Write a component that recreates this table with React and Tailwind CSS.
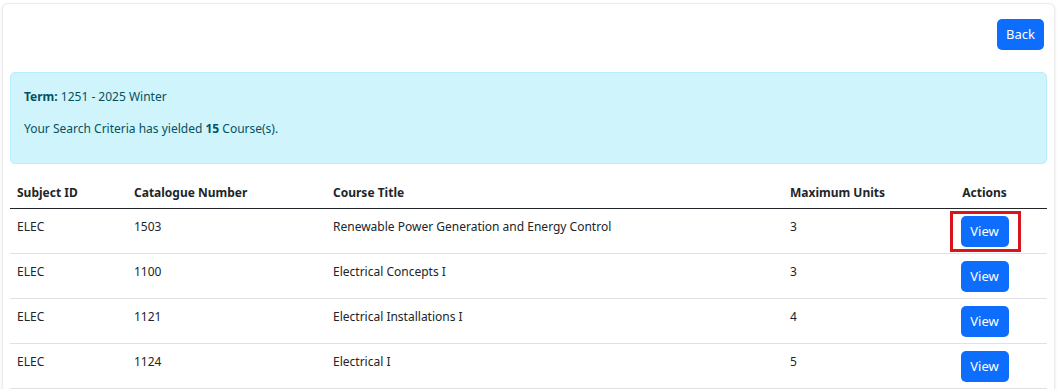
import React from 'react';

const courses = [
  { subject: 'ELEC', number: '1503', title: 'Renewable Power Generation and Energy Control', units: '3', highlight: true },
  { subject: 'ELEC', number: '1100', title: 'Electrical Concepts I', units: '3' },
  { subject: 'ELEC', number: '1121', title: 'Electrical Installations I', units: '4' },
  { subject: 'ELEC', number: '1124', title: 'Electrical I', units: '5' },
];

const ViewButton = () => (
  <button className="h-[31px] w-[48px] rounded-[5px] bg-[#0d6efd] text-[13px] text-white">
    View
  </button>
);

export default function App() {
  return (
    <div
      className="h-[389px] overflow-hidden bg-white pl-[2px] pr-[8px] pt-[3px] text-[12px] text-[#212529]"
      style={{ fontFamily: '"Noto Sans", sans-serif' }}
    >
      <div className="rounded-[6px] border border-[#ececec] bg-white px-[7px] pb-[16px] pt-[15px] shadow-sm">
        {/* Back button */}
        <div className="flex justify-end pr-[3px]">
          <button className="h-[31px] w-[47px] rounded-[5px] bg-[#0d6efd] text-[13px] text-white">
            Back
          </button>
        </div>

        {/* Search summary */}
        <div className="mt-[22px] rounded-[5px] border border-[#b6effb] bg-[#cff4fc] px-[13px] pb-[12px] pt-[14px] text-[#055160]">
          <p className="mb-[12px] leading-[20px]">
            <strong>Term:</strong> 1251 - 2025 Winter
          </p>
          <p className="mb-[12px] leading-[20px]">
            Your Search Criteria has yielded <strong>15</strong> Course(s).
          </p>
        </div>

        {/* Results table */}
        <table className="mt-[12px] w-full border-collapse">
          <thead>
            <tr className="border-b border-[#212529]">
              <th className="w-[117px] px-[7px] pb-[5px] pt-[7px] text-left font-bold leading-[20px]">Subject ID</th>
              <th className="w-[199px] px-[7px] pb-[5px] pt-[7px] text-left font-bold leading-[20px]">Catalogue Number</th>
              <th className="w-[457px] px-[7px] pb-[5px] pt-[7px] text-left font-bold leading-[20px]">Course Title</th>
              <th className="w-[139px] px-[7px] pb-[5px] pt-[7px] text-left font-bold leading-[20px]">Maximum Units</th>
              <th className="px-[7px] pb-[5px] pt-[7px] text-center font-bold leading-[20px]">Actions</th>
            </tr>
          </thead>
          <tbody>
            {courses.map((c) => (
              <tr key={c.number} className="border-b border-[#dee2e6] align-top">
                <td className="px-[7px] pt-[8px] leading-[20px]">{c.subject}</td>
                <td className="px-[7px] pt-[8px] leading-[20px]">{c.number}</td>
                <td className="px-[7px] pt-[8px] leading-[20px]">{c.title}</td>
                <td className="px-[7px] pt-[8px] leading-[20px]">{c.units}</td>
                <td className="relative px-[7px] pb-[6px] pt-[7px] text-center leading-none">
                  <ViewButton />
                  {c.highlight && (
                    <span className="pointer-events-none absolute left-[28px] top-[2px] h-[41px] w-[71px] border-[3px] border-[#d9151b]" />
                  )}
                </td>
              </tr>
            ))}
          </tbody>
        </table>
      </div>
    </div>
  );
}
